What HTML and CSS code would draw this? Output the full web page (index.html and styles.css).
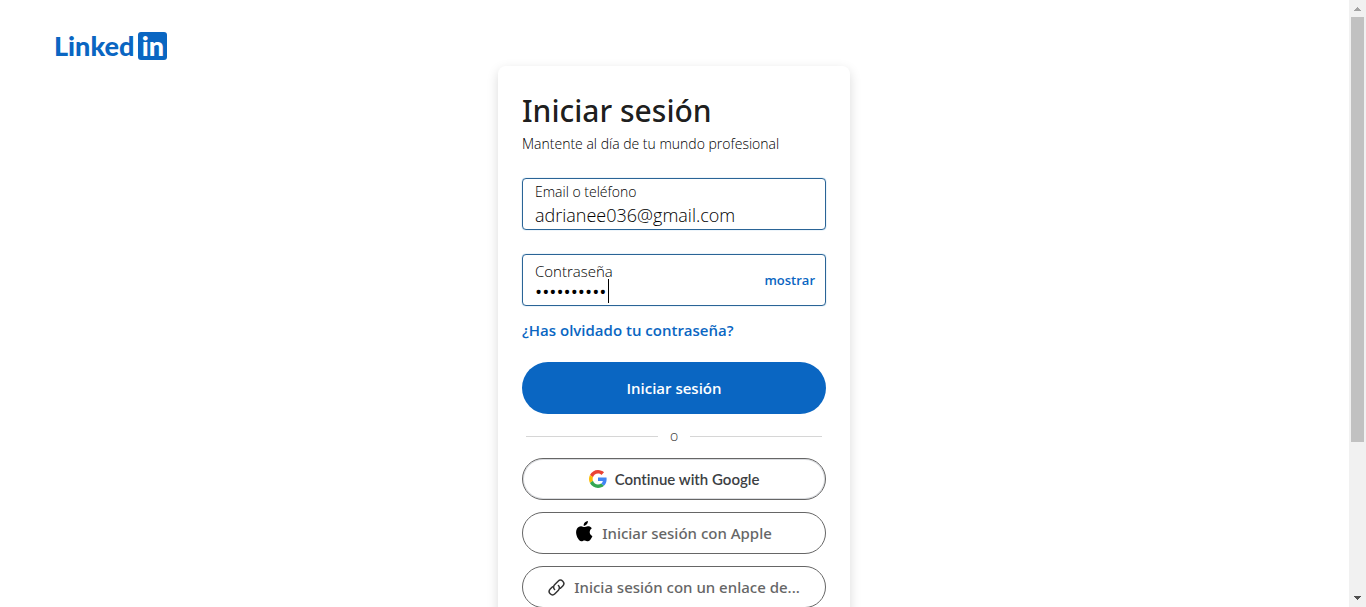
FILE: index.html
```html
<!DOCTYPE html>
<html lang="es">
<head>
<meta charset="utf-8">
<meta name="viewport" content="width=device-width, initial-scale=1">
<title>Iniciar sesión | LinkedIn</title>
<link rel="stylesheet" href="styles.css">
</head>
<body>
<div class="page">
  <header class="header">
    <a class="logo" href="#" aria-label="LinkedIn"><span class="logo-word">Linked</span><span class="logo-box">in</span></a>
  </header>
  <main class="card">
    <h1 class="title">Iniciar sesión</h1>
    <p class="subtitle">Mantente al día de tu mundo profesional</p>
    <form class="form">
      <div class="field">
        <div class="field-main">
          <label class="label" for="user">Email o teléfono</label>
          <input class="input" id="user" type="text" value="adrianee036@gmail.com">
        </div>
      </div>
      <div class="field">
        <div class="field-main">
          <label class="label label-password" for="password">Contraseña</label>
          <input class="input input-password" id="password" type="password" value="contrasena">
          <span class="caret"></span>
        </div>
        <button class="show" type="button">mostrar</button>
      </div>
      <a class="forgot" href="#">¿Has olvidado tu contraseña?</a>
      <button class="submit" type="submit">Iniciar sesión</button>
    </form>
    <div class="divider"><span class="divider-text">o</span></div>
    <div class="options">
      <button class="option option-google" type="button">
        <svg class="icon-google" viewBox="0 0 48 48" aria-hidden="true">
          <path fill="#ea4335" d="M24 9.5c3.54 0 6.71 1.22 9.21 3.6l6.85-6.85C35.9 2.38 30.47 0 24 0 14.62 0 6.51 5.38 2.56 13.22l7.98 6.19C12.43 13.72 17.74 9.5 24 9.5z"/>
          <path fill="#4285f4" d="M46.98 24.55c0-1.57-.15-3.09-.38-4.55H24v9.02h12.94c-.58 2.96-2.26 5.48-4.78 7.18l7.73 6c4.51-4.18 7.09-10.36 7.09-17.65z"/>
          <path fill="#fbbc05" d="M10.53 28.59c-.48-1.45-.76-2.99-.76-4.59s.27-3.14.76-4.59l-7.98-6.19C.92 16.46 0 20.12 0 24c0 3.88.92 7.54 2.56 10.78l7.97-6.19z"/>
          <path fill="#34a853" d="M24 48c6.48 0 11.93-2.13 15.89-5.81l-7.73-6c-2.15 1.45-4.92 2.3-8.16 2.3-6.26 0-11.57-4.22-13.47-9.91l-7.98 6.19C6.51 42.62 14.62 48 24 48z"/>
        </svg>
        <span>Continue with Google</span>
      </button>
      <button class="option" type="button">
        <svg class="icon-apple" viewBox="0 0 17 21" aria-hidden="true">
          <path d="M11.9 0c.15 1.25-.36 2.45-1.08 3.34-.75.9-1.97 1.6-3.15 1.5-.16-1.2.43-2.45 1.11-3.23C9.540.72 10.82.06 11.9 0zM15.9 7.16c-.13.09-2.22 1.28-2.2 3.81.03 3.03 2.66 4.04 2.69 4.05-.02.07-.42 1.44-1.38 2.85-.84 1.22-1.7 2.42-3.07 2.45-1.34.02-1.77-.8-3.31-.8-1.53 0-2.01.77-3.28.82-1.32.05-2.32-1.31-3.16-2.52C.47 15.32-.83 10.77.92 7.73c.87-1.51 2.42-2.47 4.11-2.49 1.29-.03 2.5.86 3.29.86.78 0 2.26-1.07 3.81-.91.65.03 2.47.26 3.77 1.97z"/>
        </svg>
        <span>Iniciar sesión con Apple</span>
      </button>
      <button class="option" type="button">
        <svg class="icon-link" viewBox="0 0 16 16" aria-hidden="true">
          <path d="M6.2 9.9a3.1 3.1 0 0 1 0-4.4l3.3-3.4a3.1 3.1 0 0 1 4.4 4.4l-2.2 2.2M9.8 6.1a3.1 3.1 0 0 1 0 4.4l-3.3 3.4a3.1 3.1 0 0 1-4.4-4.4l2.2-2.2"/>
        </svg>
        <span>Inicia sesión con un enlace de...</span>
      </button>
    </div>
  </main>
</div>
<div class="scrollbar" aria-hidden="true">
  <svg class="arrow arrow-up" viewBox="0 0 7 4"><path d="M3 0h1v1h1v1h1v1h1v1H0V3h1V2h1V1h1z"/></svg>
  <div class="thumb"></div>
  <svg class="arrow arrow-down" viewBox="0 0 7 4"><path d="M0 0h7v1H6v1H5v1H4v1H3V3H2V2H1V1H0z"/></svg>
</div>
</body>
</html>
```
FILE: styles.css
```css
* { box-sizing: border-box; }

body {
  margin: 0;
  display: flex;
  height: 100vh;
  overflow: hidden;
  background: #fff;
  color: rgba(0, 0, 0, .9);
  font-family: "Open Sans", "Noto Sans", sans-serif;
}

button, input { font-family: inherit; }
button { cursor: pointer; }

.page {
  flex: 1;
  min-width: 0;
  padding-right: 1px;
  overflow: hidden;
}

.header { padding: 32px 54px 6px; }

.logo {
  display: inline-flex;
  align-items: center;
  gap: 4px;
  height: 28px;
  color: #0a66c2;
  font-family: Lato, sans-serif;
  font-size: 27px;
  font-weight: 900;
  line-height: 28px;
  text-decoration: none;
  vertical-align: top;
}

.logo-box {
  width: 29px;
  height: 28px;
  border-radius: 3px;
  background: #0a66c2;
  color: #fff;
  text-align: center;
}

.card {
  width: 352px;
  max-width: 100%;
  margin: 0 auto;
  padding: 24px 24px 32px;
  border-radius: 8px;
  background: #fff;
  box-shadow: 0 4px 12px rgba(0, 0, 0, .15);
}

.title {
  margin: 0;
  font-family: "Noto Sans", sans-serif;
  font-size: 30px;
  font-weight: 500;
  line-height: 42px;
}

.subtitle {
  margin: 0 0 22px;
  color: #000;
  font-size: 14px;
  font-weight: 300;
  line-height: 24px;
}

.form { display: flex; flex-direction: column; }

.field {
  display: flex;
  align-items: center;
  height: 52px;
  margin-bottom: 24px;
  padding: 0 10px 0 12px;
  border: 1px solid #2a6496;
  border-radius: 4px;
  box-shadow: 0 0 1px #4c9ad4;
}

.field-main {
  position: relative;
  display: flex;
  flex: 1;
  flex-direction: column;
  min-width: 0;
}

.label { padding-top: 2px; color: #000; font-size: 14px; font-weight: 300; line-height: 20px; }
.label-password { padding-top: 4px; font-size: 15px; }

.input {
  width: 100%;
  height: 26px;
  padding: 0;
  border: 0;
  outline: 0;
  background: none;
  color: #000;
  font-size: 18px;
  font-weight: 300;
}

.input-password { height: 22px; font-size: 19px; font-weight: 400; }

.caret {
  position: absolute;
  left: 73px;
  bottom: 0;
  width: 1px;
  height: 24px;
  background: #000;
}

.show {
  padding: 0;
  border: 0;
  background: none;
  color: #0a66c2;
  font-size: 13px;
  font-weight: 600;
}

.forgot {
  align-self: flex-start;
  margin: -12px 0 20px;
  color: #0a66c2;
  font-size: 15px;
  font-weight: 600;
  line-height: 24px;
  text-decoration: none;
}

.submit {
  height: 52px;
  border: 0;
  border-radius: 26px;
  background: #0a66c2;
  color: #fff;
  font-size: 15px;
  font-weight: 600;
}

.divider {
  display: flex;
  align-items: center;
  gap: 12px;
  margin: 12px 4px;
  color: #333;
  font-size: 14px;
  font-weight: 300;
  line-height: 20px;
}

.divider::before, .divider::after {
  content: "";
  flex: 1;
  height: 1px;
  background: #d6d6d6;
}

.options { display: flex; flex-direction: column; gap: 12px; }

.option {
  display: flex;
  align-items: center;
  justify-content: center;
  gap: 9px;
  height: 42px;
  padding: 0 20px;
  border: 1px solid #666;
  border-radius: 21px;
  background: #fff;
  color: #666;
  font-family: "Noto Sans", sans-serif;
  font-size: 15px;
  font-weight: 500;
  white-space: nowrap;
}

.option-google {
  gap: 8px;
  box-shadow: inset 0 0 0 1px #dadce0;
  color: #3c4043;
  font-family: Lato, sans-serif;
  font-weight: 600;
  font-variant-ligatures: none;
}

.icon-google { width: 18px; height: 18px; }
.icon-apple { width: 17px; height: 21px; margin-bottom: 3px; }
.icon-link { width: 17px; height: 17px; fill: none; stroke: #333; stroke-width: 1.4; stroke-linecap: round; }

.scrollbar {
  display: flex;
  flex-direction: column;
  align-items: center;
  width: 17px;
  background: #f1f1f1;
}

.arrow { width: 7px; height: 4px; shape-rendering: crispEdges; }
.arrow-up { margin: 7px 0 6px; fill: #a3a3a3; }
.arrow-down { margin: auto 0 7px; fill: #505050; }
.thumb { width: 13px; height: 70%; background: #c1c1c1; }
```
